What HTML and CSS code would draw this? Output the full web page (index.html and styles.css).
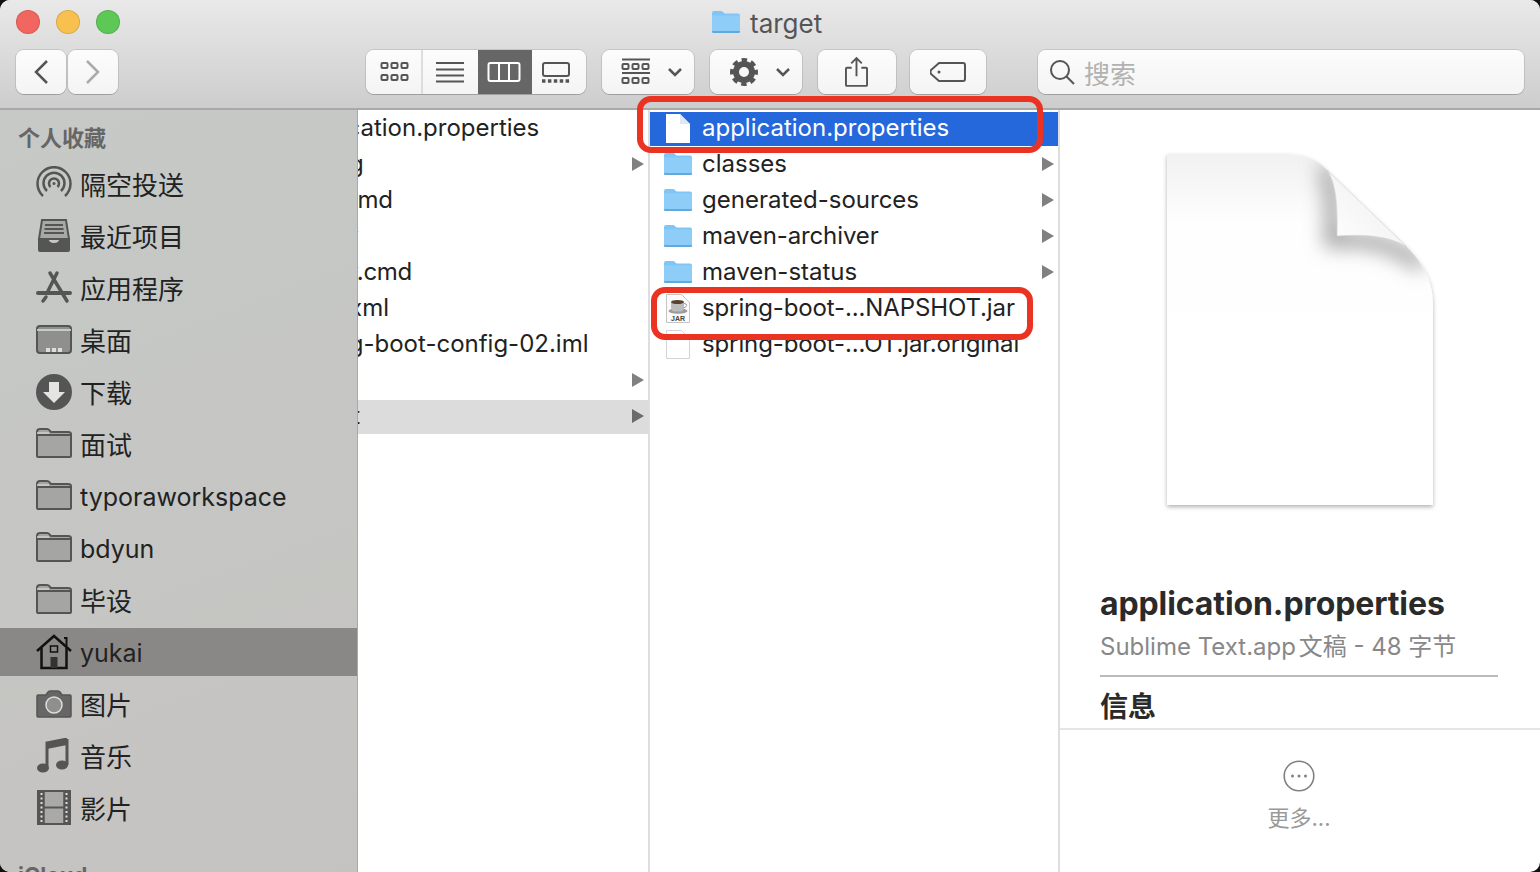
FILE: index.html
```html
<!DOCTYPE html>
<html lang="zh-CN">

<head>
    <meta charset="UTF-8">
    <title>target</title>
    <link rel="stylesheet" href="styles.css">
</head>

<body>

    <svg class="defs" width="0" height="0">
        <symbol id="folder-blue" viewBox="0 0 30 24">
            <path d="M1 3q0-2 2-2h7q1.500 0 2.500 1.500l1 1h13.500q2 0 2 2v15.500q0 2-2 2h-24q-2 0-2-2z" fill="#7fc6f6"/>
            <path d="M1 5.500h28v15.500q0 2-2 2h-24q-2 0-2-2z" fill="#8dcdf8"/>
            <path d="M1 21h28v.5q0 1.500-2 1.500h-24q-2 0-2-1.500z" fill="#5fa9dc"/>
        </symbol>
        <symbol id="folder-side" viewBox="0 0 36 30">
            <path d="M1 4q0-3 3-3h7q2 0 3 2l1 1h17q3 0 3 2v22q0 1-1 1h-32q-1 0-1-1z" fill="#a5a5a3" stroke="#555" stroke-width="2"/>
            <path d="M1 7h34" stroke="#555" stroke-width="2"/>
            <path d="M1 5h12" stroke="#d0d0ce" stroke-width="1.500"/>
        </symbol>
    </svg>

    <div class="window">
        <header class="header">
            <div class="title-row">
                <span class="light light-red"></span>
                <span class="light light-yellow"></span>
                <span class="light light-green"></span>
                <div class="title">
                    <svg class="title-icon" width="30" height="24"><use href="#folder-blue"/></svg>
                    <span class="title-text">target</span>
                </div>
            </div>
            <div class="toolbar">
                <div class="btn btn-nav">
                    <svg width="16" height="26" viewBox="0 0 16 26"><path d="M14 2L3 13l11 11" class="stroke-dark"/></svg>
                </div>
                <div class="btn btn-nav btn-next">
                    <svg width="16" height="26" viewBox="0 0 16 26"><path d="M2 2l11 11L2 24" class="stroke-light"/></svg>
                </div>

                <div class="segments">
                    <div class="segment segment-first">
                        <svg width="30" height="22" viewBox="0 0 30 22" class="outline">
                            <rect x="1.500" y="2" width="6" height="5" rx="1"/><rect x="11.500" y="2" width="6" height="5" rx="1"/><rect x="21.500" y="2" width="6" height="5" rx="1"/>
                            <rect x="1.500" y="14" width="6" height="5" rx="1"/><rect x="11.500" y="14" width="6" height="5" rx="1"/><rect x="21.500" y="14" width="6" height="5" rx="1"/>
                        </svg>
                    </div>
                    <div class="segment segment-list">
                        <svg width="30" height="22" viewBox="0 0 30 22" class="outline">
                            <path d="M1 2h28M1 8.500h28M1 14.500h28M1 20.500h28"/>
                        </svg>
                    </div>
                    <div class="segment segment-active">
                        <svg width="34" height="22" viewBox="0 0 34 22" class="outline-white">
                            <rect x="1.500" y="2" width="31" height="18" rx="2"/><path d="M12 2v18M22 2v18"/>
                        </svg>
                    </div>
                    <div class="segment segment-last">
                        <svg width="30" height="22" viewBox="0 0 30 22">
                            <rect x="2" y="2" width="26" height="13" rx="2" fill="none" stroke="#555" stroke-width="2"/>
                            <path d="M1 20h28" stroke="#555" stroke-width="3.500" stroke-dasharray="3.500 2.400"/>
                        </svg>
                    </div>
                </div>

                <div class="btn btn-menu btn-group">
                    <svg width="30" height="28" viewBox="0 0 30 28" class="outline">
                        <path d="M1 1.500h28M1 15h28"/>
                        <rect x="1.500" y="6" width="6" height="5" rx="1"/><rect x="11.500" y="6" width="6" height="5" rx="1"/><rect x="21.500" y="6" width="6" height="5" rx="1"/>
                        <rect x="1.500" y="20" width="6" height="5" rx="1"/><rect x="11.500" y="20" width="6" height="5" rx="1"/><rect x="21.500" y="20" width="6" height="5" rx="1"/>
                    </svg>
                    <svg class="chevron" width="16" height="10" viewBox="0 0 16 10"><path d="M2 2l6 6 6-6"/></svg>
                </div>
                <div class="btn btn-menu btn-gear">
                    <svg width="28" height="28" viewBox="0 0 28 28">
                        <circle cx="14" cy="14" r="8" fill="none" stroke="#555" stroke-width="6"/>
                        <circle cx="14" cy="14" r="12" fill="none" stroke="#555" stroke-width="4" stroke-dasharray="5.420 4" stroke-dashoffset="2.700"/>
                    </svg>
                    <svg class="chevron" width="16" height="10" viewBox="0 0 16 10"><path d="M2 2l6 6 6-6"/></svg>
                </div>
                <div class="btn btn-share">
                    <svg class="outline share-icon" width="23" height="31" viewBox="0 0 24 32">
                        <path d="M7 12H2q-1 0-1 1v17q0 1 1 1h20q1 0 1-1V13q0-1-1-1h-5"/>
                        <path d="M12 21V2M6.500 7.500L12 2l5.500 5.500"/>
                    </svg>
                </div>
                <div class="btn btn-tag">
                    <svg width="36" height="22" viewBox="0 0 36 22" class="outline">
                        <path d="M9 2h24q2 0 2 2v14q0 2-2 2H9l-8-7q-1-2 0-4z"/>
                        <circle cx="9" cy="11" r="1.500" fill="#555" stroke="none"/>
                    </svg>
                </div>
                <div class="search">
                    <svg width="26" height="26" viewBox="0 0 26 26" class="search-icon"><circle cx="11" cy="11" r="9"/><path d="M17.500 17.500L25 25"/></svg>
                    <span>搜索</span>
                </div>
            </div>
        </header>

        <div class="body">
            <nav class="sidebar">
                <div class="side-title">个人收藏</div>
                <ul class="side-list">
                    <li class="side-item">
                        <svg width="36" height="36" viewBox="0 0 36 36" class="side-icon" fill="none" stroke="#555" stroke-width="2.500">
                            <path d="M7 30a16.500 16.500 0 1 1 22 0"/>
                            <path d="M11 25a10.500 10.500 0 1 1 14 0"/>
                            <path d="M14.500 21a5 5 0 1 1 7 0"/>
                            <circle cx="18" cy="17.500" r="1.500" fill="#555" stroke="none"/>
                        </svg>
                        <span class="side-text">隔空投送</span>
                    </li>
                    <li class="side-item">
                        <svg width="36" height="36" viewBox="0 0 36 36" class="side-icon">
                            <path d="M6 2h24l3 19H3z" fill="#a8a8a6" stroke="#555" stroke-width="2"/>
                            <path d="M9 7h18M8.500 11h19M8 15h20" stroke="#555" stroke-width="2"/>
                            <path d="M2 20h10q1 5 6 5t6-5h10v12q0 2-2 2H4q-2 0-2-2z" fill="#555"/>
                        </svg>
                        <span class="side-text">最近项目</span>
                    </li>
                    <li class="side-item">
                        <svg width="36" height="36" viewBox="0 0 36 36" class="side-icon" fill="none" stroke="#555" stroke-linecap="round">
                            <path d="M14 3l17 28M21 3l-9 18" stroke-width="3.500"/>
                            <path d="M2 23h32" stroke-width="4"/>
                            <path d="M10 27l-3 4" stroke-width="3.500"/>
                        </svg>
                        <span class="side-text">应用程序</span>
                    </li>
                    <li class="side-item">
                        <svg width="36" height="30" viewBox="0 0 36 30" class="side-icon">
                            <rect x="1" y="1" width="34" height="27" rx="3" fill="#8f8f8d" stroke="#555" stroke-width="2"/>
                            <path d="M1 5h34" stroke="#ddd" stroke-width="1.500"/>
                            <path d="M10 23h4v4h-4zM16 23h4v4h-4zM22 23h4v4h-4z" fill="#ddd"/>
                        </svg>
                        <span class="side-text">桌面</span>
                    </li>
                    <li class="side-item">
                        <svg width="36" height="36" viewBox="0 0 36 36" class="side-icon">
                            <circle cx="18" cy="18" r="18" fill="#555"/>
                            <path d="M13 8h10v10h6L18 29 7 18h6z" fill="#e4e4e2"/>
                        </svg>
                        <span class="side-text">下载</span>
                    </li>
                    <li class="side-item">
                        <svg width="36" height="30" class="side-icon side-folder"><use href="#folder-side"/></svg>
                        <span class="side-text">面试</span>
                    </li>
                    <li class="side-item">
                        <svg width="36" height="30" class="side-icon side-folder"><use href="#folder-side"/></svg>
                        <span class="side-latin">typoraworkspace</span>
                    </li>
                    <li class="side-item">
                        <svg width="36" height="30" class="side-icon side-folder"><use href="#folder-side"/></svg>
                        <span class="side-latin">bdyun</span>
                    </li>
                    <li class="side-item">
                        <svg width="36" height="30" class="side-icon side-folder"><use href="#folder-side"/></svg>
                        <span class="side-text">毕设</span>
                    </li>
                    <li class="side-item side-item-active">
                        <svg width="36" height="36" viewBox="0 0 36 36" class="side-icon" fill="none" stroke="#111" stroke-width="2.500">
                            <path d="M1 17L18 2l17 15"/>
                            <path d="M28 4h2.500v8" stroke-width="2"/>
                            <path d="M5.500 14v20h25V14"/>
                            <rect x="14.500" y="12" width="7" height="6" stroke-width="1.500"/>
                            <rect x="14.500" y="23" width="7" height="11" fill="#333" stroke="none"/>
                        </svg>
                        <span class="side-latin">yukai</span>
                    </li>
                    <li class="side-item">
                        <svg width="36" height="28" viewBox="0 0 36 28" class="side-icon">
                            <path d="M1 6q0-1 1-1h8l2-3q1-1 3-1h6q2 0 3 1l2 3h8q1 0 1 1v20q0 1-1 1H2q-1 0-1-1z" fill="#666" stroke="#555" stroke-width="1.500"/>
                            <circle cx="18" cy="15" r="8" fill="#8f8f8d" stroke="#ddd" stroke-width="1.500"/>
                        </svg>
                        <span class="side-text">图片</span>
                    </li>
                    <li class="side-item">
                        <svg width="36" height="36" viewBox="0 0 36 36" class="side-icon">
                            <path d="M31 1L11 5v23.500" fill="none" stroke="#555" stroke-width="3"/>
                            <path d="M31 1v26" stroke="#555" stroke-width="3"/>
                            <path d="M11 5l20-4v6l-20 4z" fill="#555"/>
                            <ellipse cx="7" cy="30" rx="6" ry="4.500" fill="#555"/>
                            <ellipse cx="26" cy="27" rx="6" ry="4.500" fill="#555"/>
                        </svg>
                        <span class="side-text">音乐</span>
                    </li>
                    <li class="side-item">
                        <svg width="36" height="36" viewBox="0 0 36 36" class="side-icon">
                            <rect x="2" y="1" width="32" height="33" fill="#a9a9a7"/>
                            <path d="M2 1h32v33H2zM2 17.500h32" fill="none" stroke="#555" stroke-width="2"/>
                            <path d="M5.500 1v33M30.500 1v33" stroke="#555" stroke-width="5"/>
                            <path d="M5.500 3v30M30.500 3v30" stroke="#ddd" stroke-width="2" stroke-dasharray="2 2.500"/>
                            <path d="M8 1v33M28 1v33" stroke="#555" stroke-width="1.500"/>
                        </svg>
                        <span class="side-text">影片</span>
                    </li>
                </ul>
                <div class="side-title side-title-next">iCloud</div>
            </nav>

            <section class="column column-parent">
                <div class="row"><span class="name">application.properties</span></div>
                <div class="row"><span class="name">config</span><i class="arrow"></i></div>
                <div class="row"><span class="name name-tight">HELP.md</span></div>
                <div class="row"><span class="name name-tight">mvnw</span></div>
                <div class="row"><span class="name name-tight">mvnw.cmd</span></div>
                <div class="row"><span class="name">pom.xml</span></div>
                <div class="row"><span class="name">spring-boot-config-02.iml</span></div>
                <div class="row"><span class="name">src</span><i class="arrow"></i></div>
                <div class="row row-open"><span class="name name-wide">target</span><i class="arrow arrow-dark"></i></div>
            </section>

            <section class="column column-files">
                <div class="row row-selected">
                    <svg class="file-icon" width="24" height="29" viewBox="0 0 24 29"><path d="M0 0h14l10 10v19H0z" fill="#fff"/><path d="M14 0v10h10z" fill="#dfe6f5"/></svg>
                    <span class="name">application.properties</span>
                </div>
                <div class="row">
                    <svg class="folder-icon" width="30" height="24"><use href="#folder-blue"/></svg>
                    <span class="name">classes</span><i class="arrow"></i>
                </div>
                <div class="row">
                    <svg class="folder-icon" width="30" height="24"><use href="#folder-blue"/></svg>
                    <span class="name">generated-sources</span><i class="arrow"></i>
                </div>
                <div class="row">
                    <svg class="folder-icon" width="30" height="24"><use href="#folder-blue"/></svg>
                    <span class="name name-snug">maven-archiver</span><i class="arrow"></i>
                </div>
                <div class="row">
                    <svg class="folder-icon" width="30" height="24"><use href="#folder-blue"/></svg>
                    <span class="name">maven-status</span><i class="arrow"></i>
                </div>
                <div class="row">
                    <svg class="file-icon" width="24" height="29" viewBox="0 0 24 29">
                        <path d="M.5.500h15l8 8v20H.500z" fill="#fbfbfb" stroke="#c4c4c4"/>
                        <ellipse cx="12" cy="17" rx="9.500" ry="2.800" fill="#9a9a9a"/>
                        <path d="M5 8h13v5q0 4-3 4.500H8q-3-.5-3-4.500z" fill="#bcbcbc"/>
                        <path d="M18 9.500q3 0 2.500 2t-3 2.500" fill="none" stroke="#999"/>
                        <ellipse cx="11.500" cy="8" rx="6.500" ry="2" fill="#5a4232"/>
                        <text x="12" y="27" class="jar-label">JAR</text>
                    </svg>
                    <span class="name name-snug">spring-boot-...NAPSHOT.jar</span>
                </div>
                <div class="row">
                    <svg class="file-icon" width="24" height="29" viewBox="0 0 24 29"><path d="M.5.500h15l8 8v20H.500z" fill="#fff" stroke="#d4d4d4"/></svg>
                    <span class="name name-snug">spring-boot-...OT.jar.original</span>
                </div>
            </section>

            <aside class="preview">
                <div class="preview-info">
                    <svg class="doc" width="280" height="362" viewBox="0 0 280 362">
                        <defs>
                            <linearGradient id="doc-top" x1="0" y1="0" x2="0" y2="1">
                                <stop offset="0" stop-color="#f1f1f1"/>
                                <stop offset="0.2" stop-color="#fefefe"/>
                                <stop offset="1" stop-color="#fff"/>
                            </linearGradient>
                            <linearGradient id="doc-fold" x1="0" y1="1" x2="1" y2="0">
                                <stop offset="0" stop-color="#fff"/>
                                <stop offset="1" stop-color="#ececec"/>
                            </linearGradient>
                            <filter id="doc-shadow" x="-5%" y="-5%" width="110%" height="110%">
                                <feDropShadow dx="0" dy="2" stdDeviation="2" flood-color="#000" flood-opacity="0.3"/>
                            </filter>
                            <filter id="fold-blur" x="-40%" y="-40%" width="180%" height="180%">
                                <feGaussianBlur stdDeviation="10"/>
                            </filter>
                            <clipPath id="doc-clip">
                                <path d="M7 4H123C145 4 158 10 167 20L247 97C262 112 273 130 273 155V355H7z"/>
                            </clipPath>
                        </defs>
                        <path d="M7 4H123C145 4 158 10 167 20L247 97C262 112 273 130 273 155V355H7z" fill="url(#doc-top)" filter="url(#doc-shadow)"/>
                        <g clip-path="url(#doc-clip)">
                            <path d="M164 16C174 36 174 60 172 90C205 88 235 92 262 116" fill="none" stroke="#999" stroke-width="14" filter="url(#fold-blur)"/>
                        </g>
                        <path d="M167 20C175 32 178 50 177 86C205 84 230 86 247 97z" fill="url(#doc-fold)" stroke="#d6d6d6" stroke-width="0.700"/>
                    </svg>
                    <h2 class="info-name">application.properties</h2>
                    <p class="info-kind">Sublime Text.app <span class="info-kind-cjk">文稿 - 48 字节</span></p>
                    <hr class="info-line">
                    <h3 class="info-head">信息</h3>
                </div>
                <div class="preview-more">
                    <svg width="32" height="32" viewBox="0 0 32 32">
                        <circle cx="16" cy="16" r="14.800" fill="none" stroke="#808080" stroke-width="1.600"/>
                        <circle cx="9.500" cy="16" r="1.500" fill="#808080"/><circle cx="16" cy="16" r="1.500" fill="#808080"/><circle cx="22.500" cy="16" r="1.500" fill="#808080"/>
                    </svg>
                    <span>更多...</span>
                </div>
            </aside>
        </div>

        <!-- red boxes someone drew over the screenshot -->
        <div class="mark mark-one"></div>
        <div class="mark mark-two"></div>
    </div>

</body>

</html>
```

FILE: styles.css
```css
* {
    box-sizing: border-box;
}

body {
    margin: 0;
    background-color: #111;
    font-family: Inter, "Noto Sans CJK SC", sans-serif;
    color: #222;
}

.defs {
    position: absolute;
}

.window {
    position: relative;
    display: flex;
    flex-direction: column;
    height: 872px;
    border-radius: 10px;
    overflow: hidden;
    background-color: #fff;
}

/* header */

.header {
    height: 110px;
    padding: 10px 16px 0;
    border-bottom: 2px solid #a9a9a9;
    background: linear-gradient(#e9e9e9, #cdcdcd);
}

.title-row {
    display: flex;
    align-items: center;
    height: 24px;
}

.light {
    width: 24px;
    height: 24px;
    margin-right: 16px;
    border-radius: 50%;
    border: 1px solid rgba(0, 0, 0, 0.12);
}

.light-red {
    background-color: #f1675f;
}

.light-yellow {
    background-color: #f8c14f;
}

.light-green {
    background-color: #5ec856;
}

.title {
    display: flex;
    align-items: center;
    margin-left: 575px;
    font-size: 26px;
    color: #555;
}

.title-icon {
    margin-right: 9px;
}

.title-text {
    margin-top: 2px;
}

.toolbar {
    display: flex;
    margin-top: 16px;
    height: 44px;
}

.btn,
.segments,
.search {
    height: 44px;
    border-radius: 8px;
    background: linear-gradient(#fcfcfc, #f4f4f4);
    box-shadow: 0 0 0 1px rgba(0, 0, 0, 0.1), 0 1px 0 rgba(0, 0, 0, 0.15);
}

.btn {
    display: flex;
    align-items: center;
    justify-content: center;
}

.btn-nav {
    width: 50px;
}

.btn-next {
    margin-left: 2px;
}

.stroke-dark,
.stroke-light {
    fill: none;
    stroke-width: 2.500px;
}

.stroke-dark {
    stroke: #555;
}

.stroke-light {
    stroke: #aaa;
}

.outline,
.outline-white,
.search-icon,
.chevron {
    fill: none;
    stroke: #555;
    stroke-width: 2px;
}

.outline-white {
    stroke: #fff;
}

.chevron {
    stroke-width: 2.500px;
}

.segments {
    display: flex;
    width: 220px;
    margin-left: 248px;
    overflow: hidden;
}

.segment {
    display: flex;
    align-items: center;
    justify-content: center;
}

.segment-first {
    width: 57px;
    padding-left: 3px;
    border-right: 2px solid #ddd;
}

.segment-list {
    width: 55px;
    padding-right: 2px;
}

.segment-active {
    width: 54px;
    padding-right: 2px;
    background-color: #666;
}

.segment-last {
    width: 54px;
    padding-right: 6px;
}

.btn-menu {
    justify-content: flex-start;
    width: 92px;
}

.btn-group {
    gap: 16px;
    margin-left: 16px;
    padding-left: 19px;
}

.btn-gear {
    gap: 17px;
    margin-left: 16px;
    padding-left: 20px;
}

.btn-share {
    width: 78px;
    margin-left: 16px;
}

.share-icon {
    margin: 0 2px 2px 0;
}

.btn-tag {
    width: 76px;
    margin-left: 14px;
}

.search {
    display: flex;
    align-items: center;
    gap: 9px;
    width: 486px;
    margin-left: 52px;
    padding-left: 11px;
    font-size: 26px;
    color: #b2b2b2;
}

/* body */

.body {
    display: flex;
    flex: 1;
    min-height: 0;
}

.sidebar {
    width: 358px;
    flex-shrink: 0;
    border-right: 1px solid #a9a9a9;
    background: linear-gradient(160deg, #c6c9c6, #c5c3c1);
}

.side-title {
    height: 28px;
    margin: 14px 0 9px 18px;
    font-size: 22px;
    line-height: 28px;
    font-weight: 700;
    color: #666;
}

.side-title-next {
    margin-top: 28px;
}

.side-list {
    display: flex;
    flex-direction: column;
    gap: 4px;
    margin: 0;
    padding: 0;
    list-style: none;
}

.side-item {
    display: flex;
    align-items: center;
    height: 48px;
    padding-left: 36px;
    font-size: 26px;
}

.side-item-active {
    margin: -1px 0 1px;
    background-color: #8a8886;
}

.side-icon {
    flex-shrink: 0;
    margin: 0 8px 2px 0;
}

.side-folder {
    margin-bottom: 4px;
}

.side-item-active .side-icon {
    margin-bottom: 0;
}

.side-text {
    padding-bottom: 4px;
}

.side-latin {
    font-size: 25px;
}

.side-item-active .side-latin {
    padding-top: 2px;
}

.column {
    flex-shrink: 0;
    border-right: 2px solid #dedede;
    font-size: 24px;
}

.column-parent {
    width: 292px;
}

.column-files {
    width: 410px;
}

.row {
    display: flex;
    align-items: center;
    height: 34px;
    margin-top: 2px;
    padding-right: 4px;
    overflow: hidden;
    white-space: nowrap;
}

.name {
    padding-bottom: 3px;
}

.column-parent .name {
    margin-left: -66px;
}

.name-tight {
    letter-spacing: -0.35px;
}

.name-wide {
    letter-spacing: 0.3px;
}

.name-snug {
    letter-spacing: -0.12px;
}

.row-open {
    background-color: #dcdcdc;
}

.row-selected {
    background-color: #2568dc;
    color: #fff;
}

.arrow {
    margin: 0 0 2px auto;
    border-left: 12px solid #808080;
    border-top: 7px solid transparent;
    border-bottom: 7px solid transparent;
}

.arrow-dark {
    border-left-color: #6a6a6a;
}

.file-icon {
    margin: 0 12px 2px 16px;
}

.folder-icon {
    margin: 0 9px 2px 13px;
}

.jar-label {
    font-family: "Liberation Sans", sans-serif;
    font-size: 7px;
    font-weight: 700;
    text-anchor: middle;
    fill: #444;
}

/* preview */

.preview {
    display: flex;
    flex-direction: column;
    flex: 1;
    min-width: 0;
}

.preview-info {
    display: flex;
    flex-direction: column;
    height: 618px;
    padding: 40px 42px 0 40px;
    overflow: hidden;
}

.doc {
    align-self: center;
    flex-shrink: 0;
    margin-right: -2px;
}

.info-name {
    margin: 72px 0 0;
    font-size: 32px;
    line-height: 40px;
    font-weight: 700;
    letter-spacing: -0.1px;
    color: #2a2a2a;
}

.info-kind {
    margin: 8px 0 0;
    font-size: 24px;
    line-height: 30px;
    color: #888;
}

.info-kind-cjk {
    margin-left: -4px;
}

.info-line {
    width: 100%;
    height: 2px;
    margin: 13px 0 0;
    border: none;
    background-color: #bbb;
}

.info-head {
    margin: 12px 0 0;
    font-size: 28px;
    line-height: 36px;
    font-weight: 700;
    color: #2a2a2a;
}

.preview-more {
    display: flex;
    flex-direction: column;
    align-items: center;
    flex: 1;
    padding: 30px 2px 0 0;
    border-top: 2px solid #e5e5e5;
    font-size: 22px;
    line-height: 26px;
    color: #999;
}

.preview-more span {
    margin-top: 13px;
}

/* annotations */

.mark {
    position: absolute;
    border: 6px solid #ea3323;
    border-radius: 14px;
}

.mark-one {
    left: 637px;
    top: 96px;
    width: 406px;
    height: 57px;
}

.mark-two {
    left: 651px;
    top: 287px;
    width: 382px;
    height: 53px;
}
```
